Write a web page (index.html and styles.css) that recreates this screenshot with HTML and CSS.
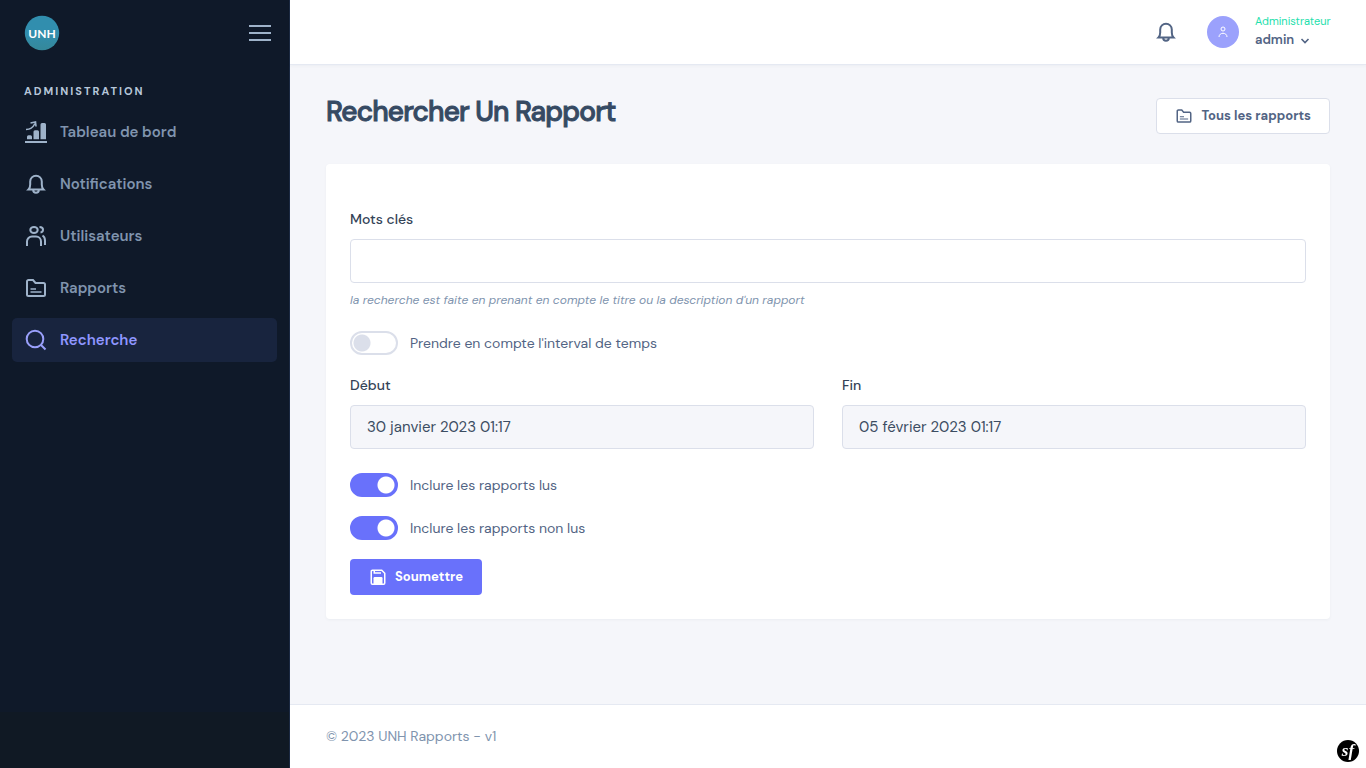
FILE: index.html
```html
<!DOCTYPE html>
<html lang="fr">
<head>
<meta charset="utf-8">
<meta name="viewport" content="width=device-width, initial-scale=1">
<title>Rechercher un rapport</title>
<link rel="stylesheet" href="styles.css">
</head>
<body>
<svg class="sprite" aria-hidden="true">
  <symbol id="i-bell" viewBox="0 0 24 24"><path d="M4.500 17.500c1-1 1.700-2.500 1.700-5V9.500a5.800 5.800 0 0 1 11.600 0v3c0 2.500.7 4 1.700 5zM9.200 18a2.800 2.800 0 0 0 5.600 0"/></symbol>
  <symbol id="i-folder" viewBox="0 0 24 24"><path d="M3 19V5.500A1.500 1.500 0 0 1 4.500 4H9l2.500 3h8A1.500 1.500 0 0 1 21 8.500v10a1.500 1.500 0 0 1-1.500 1.500h-15A1.500 1.500 0 0 1 3 18.500z"/><path d="M6.500 13H12M6.500 16h11" stroke-width="1.600"/></symbol>
</svg>
<div class="app">
  <aside class="sidebar">
    <div class="sidebar-head">
      <a href="#" class="logo" aria-label="UNH Rapports">
        <svg viewBox="0 0 36 36" width="36" height="36">
          <defs><linearGradient id="lg" x2="0" y2="1"><stop offset="0.5" stop-color="#318eae"/><stop offset="1" stop-color="#35889a"/></linearGradient></defs>
          <circle class="logo-disc" cx="18" cy="18" r="17.200" fill="url(#lg)"/>
          <text x="18" y="23" class="logo-text" text-anchor="middle">UNH</text>
        </svg>
      </a>
      <button type="button" class="menu-btn" aria-label="Menu">
        <svg viewBox="0 0 24 24" width="24" height="24"><path d="M1 5h22M1 12h22M1 19h22"/></svg>
      </button>
    </div>
    <nav class="nav">
      <h2 class="nav-title">ADMINISTRATION</h2>
      <a href="#" class="nav-link">
        <svg viewBox="0 0 24 24"><path d="M1 22h22" stroke-width="2"/><path d="M2 9.500c4 0 7-2 9-6M6.500 3l5-1 .5 4.500" stroke-width="1.600"/><path class="solid" d="M3 19.200v-2.500a1.500 1.500 0 0 1 1.500-1.500h2A1.500 1.500 0 0 1 8 16.700v2.500zM9.500 19.200v-7.500a1.500 1.500 0 0 1 1.500-1.500h2.500a1.500 1.500 0 0 1 1.500 1.500v7.500zM16.500 19.200V4.500A1.500 1.500 0 0 1 18 3h2.500A1.500 1.500 0 0 1 22 4.500v14.700z"/></svg>
        <span>Tableau de bord</span></a>
      <a href="#" class="nav-link"><svg><use href="#i-bell"/></svg><span>Notifications</span></a>
      <a href="#" class="nav-link">
        <svg viewBox="0 0 24 24"><ellipse cx="10" cy="6" rx="3.700" ry="3"/><path d="M3 22v-4.500a5 5 0 0 1 5-5h4a5 5 0 0 1 5 5V22M15.500 3c2.200 0 3.500 1.300 3.500 2.700s-1 2.500-2.500 2.700M18.500 11.500c1.700 1 2.500 2.800 2.500 5V21"/></svg>
        <span>Utilisateurs</span></a>
      <a href="#" class="nav-link"><svg><use href="#i-folder"/></svg><span>Rapports</span></a>
      <a href="#" class="nav-link active" aria-current="page">
        <svg viewBox="0 0 24 24"><circle cx="11" cy="11" r="8.300"/><path d="M17 17l4.500 4.500"/></svg>
        <span>Recherche</span></a>
    </nav>
  </aside>

  <div class="main">
    <header class="topbar">
      <button type="button" class="bell-btn" aria-label="Notifications"><svg><use href="#i-bell"/></svg></button>
      <button type="button" class="user">
        <span class="avatar"><svg viewBox="0 0 14 14" width="14" height="14"><circle cx="7" cy="4" r="2"/><path d="M3 12c0-5 8-5 8 0"/></svg></span>
        <span class="user-info">
          <span class="user-role">Administrateur</span>
          <span class="user-name">admin <svg viewBox="0 0 10 10" width="10" height="10"><path d="M1.500 4L5 7.500 8.500 4" stroke-width="1.600"/></svg></span>
        </span>
      </button>
    </header>

    <main class="content">
      <div class="page-head">
        <h1>Rechercher Un Rapport</h1>
        <a href="#" class="btn btn-outline"><svg><use href="#i-folder"/></svg><span>Tous les rapports</span></a>
      </div>
      <form class="card">
        <div class="field">
          <label for="keywords">Mots clés</label>
          <input type="text" id="keywords" class="control">
          <p class="hint">la recherche est faite en prenant en compte le titre ou la description d'un rapport</p>
        </div>
        <label class="toggle"><input type="checkbox"><span>Prendre en compte l'interval de temps</span></label>
        <div class="row">
          <div class="field">
            <label for="start">Début</label>
            <input type="text" id="start" class="control" value="30 janvier 2023 01:17" readonly>
          </div>
          <div class="field">
            <label for="end">Fin</label>
            <input type="text" id="end" class="control" value="05 février 2023 01:17" readonly>
          </div>
        </div>
        <div class="toggles">
          <label class="toggle"><input type="checkbox" checked><span>Inclure les rapports lus</span></label>
          <label class="toggle"><input type="checkbox" checked><span>Inclure les rapports non lus</span></label>
          <button type="button" class="btn btn-primary">
            <svg viewBox="0 0 24 24"><path d="M3 20V4.500A1.500 1.500 0 0 1 4.500 3H17l4 4v13a1.500 1.500 0 0 1-1.500 1.500h-15A1.500 1.500 0 0 1 3 20zM7 3v3.500h9"/><path class="solid" d="M6 22v-8.500A1.500 1.500 0 0 1 7.500 12h9a1.500 1.500 0 0 1 1.500 1.500V22z"/></svg>
            <span>Soumettre</span></button>
        </div>
      </form>
    </main>

    <footer class="footer">© 2023 UNH Rapports - v1</footer>
  </div>
</div>
<button type="button" class="sf" aria-label="Symfony"><span>sf</span></button>
</body>
</html>
```
FILE: styles.css
```css
* { box-sizing: border-box; }
body {
  margin: 0;
  font-family: "DM Sans", Inter, Roboto, sans-serif;
  font-size: 14px;
  line-height: 21px;
  color: #526484;
  background: #f5f6fa;
}
h1, h2, p { margin: 0; }
a { color: inherit; text-decoration: none; }
button { font: inherit; color: inherit; border: 0; padding: 0; background: none; cursor: pointer; }
svg { fill: none; stroke: currentColor; stroke-width: 2; flex: none; display: block; }
.solid { fill: currentColor; stroke: none; }
.sprite { position: absolute; width: 0; height: 0; }

.app { display: flex; min-height: 100vh; }
.sidebar {
  flex: 0 0 290px;
  background: linear-gradient(#101924 0, #101924 100%) bottom / 100% 56px no-repeat #0f1929;
  border-right: 1px solid #1b2942;
}
.sidebar-head {
  display: flex;
  align-items: center;
  justify-content: space-between;
  height: 65px;
  padding: 0 17px 0 24px;
}
.menu-btn { color: #9fb3ca; }
.logo-disc { stroke: none; }
.logo-text { font: 700 12px Lato, sans-serif; fill: #fff; stroke: none; }
.nav { display: flex; flex-direction: column; gap: 8px; padding: 16px 12px; }
.nav-title {
  padding-left: 12px;
  font-size: 11px;
  line-height: 21px;
  letter-spacing: 2px;
  font-weight: 700;
  color: #b6c6d9;
}
.nav-link {
  display: flex;
  align-items: center;
  gap: 12px;
  height: 44px;
  padding: 0 12px;
  border-radius: 5px;
  font-size: 15px;
  font-weight: 600;
  color: #8094ae;
}
.nav-link svg { width: 24px; height: 24px; color: #9fb3ca; }
.nav-link.active { background: #18243e; color: #8f96ff; }
.nav-link.active svg { color: #9aa0fb; }

.main { flex: 1; min-width: 0; display: flex; flex-direction: column; }
.topbar {
  display: flex;
  align-items: center;
  justify-content: flex-end;
  gap: 29px;
  height: 65px;
  padding: 0 33px;
  background: #fff;
  border-bottom: 1px solid #e5e9f2;
  box-shadow: 0 1px 3px rgba(54, 74, 99, 0.05);
}
.bell-btn svg { width: 24px; height: 24px; }
.user { display: flex; align-items: center; gap: 16px; text-align: left; }
.avatar {
  display: grid;
  place-items: center;
  width: 32px;
  height: 32px;
  border-radius: 50%;
  background: #9ba1fc;
  color: #fff;
}
.avatar svg { stroke-width: 1; }
.user-info { display: flex; flex-direction: column; min-width: 78px; }
.user-role { font-size: 11px; line-height: 15px; color: #1ee0ac; }
.user-name { display: flex; align-items: center; gap: 6px; font-size: 13px; font-weight: 600; }

.content { flex: 1; padding: 33px 36px; }
.page-head { display: flex; align-items: center; justify-content: space-between; padding-bottom: 30px; }
h1 {
  padding-bottom: 8px;
  font-size: 28px;
  line-height: 28px;
  font-weight: 500;
  -webkit-text-stroke: 1px currentColor;
  letter-spacing: -0.03em;
  color: #364a63;
}
.btn {
  display: inline-flex;
  align-items: center;
  gap: 8px;
  height: 36px;
  padding: 0 18px;
  border: 1px solid transparent;
  border-radius: 4px;
  font-size: 13px;
  font-weight: 700;
}
.btn svg { width: 18px; height: 18px; }
.btn span { padding-bottom: 2px; }
.btn-outline { background: #fff; border-color: #dbdfea; }
.btn-primary { background: #6971fb; color: #fff; }
.card {
  padding: 45px 24px 24px;
  background: #fff;
  border-radius: 4px;
  box-shadow: 0 1px 3px rgba(54, 74, 99, 0.05);
}
.field { display: flex; flex-direction: column; gap: 8px; }
.field label { padding-bottom: 1px; font-weight: 500; color: #344357; }
.control {
  width: 100%;
  height: 44px;
  padding: 0 16px;
  border: 1px solid #dbdfea;
  border-radius: 4px;
  background: #fff;
  font: inherit;
  font-size: 15px;
  color: #3c4d62;
}
.control[readonly] { background: #f5f6fa; }
.hint { font-size: 12px; line-height: 18px; font-style: italic; color: #8094ae; }
.card > .toggle { margin: 22px 0 20px; }
.row { display: grid; grid-template-columns: 1fr 1fr; gap: 28px; }
.toggles { display: flex; flex-direction: column; align-items: flex-start; gap: 19px; margin-top: 24px; }
.toggle { display: flex; align-items: center; gap: 12px; }
.toggle input {
  appearance: none;
  flex: none;
  width: 48px;
  height: 24px;
  margin: 0;
  border: 2px solid #dbdfea;
  border-radius: 12px;
  background: radial-gradient(circle at 10px 10px, #dbdfea 8px, #fff 9px);
}
.toggle input:checked {
  border-color: #6971fb;
  background: radial-gradient(circle at 34px 10px, #fff 8px, #6971fb 9px);
}
.footer { padding: 21px 36px; border-top: 1px solid #e5e9f2; background: #fff; color: #8094ae; }
.sf {
  position: fixed;
  right: 7px;
  bottom: 6px;
  width: 22px;
  height: 22px;
  border-radius: 50%;
  background: #000;
  color: #fff;
  font: italic 700 17px/20px "Liberation Serif", serif;
}
```
